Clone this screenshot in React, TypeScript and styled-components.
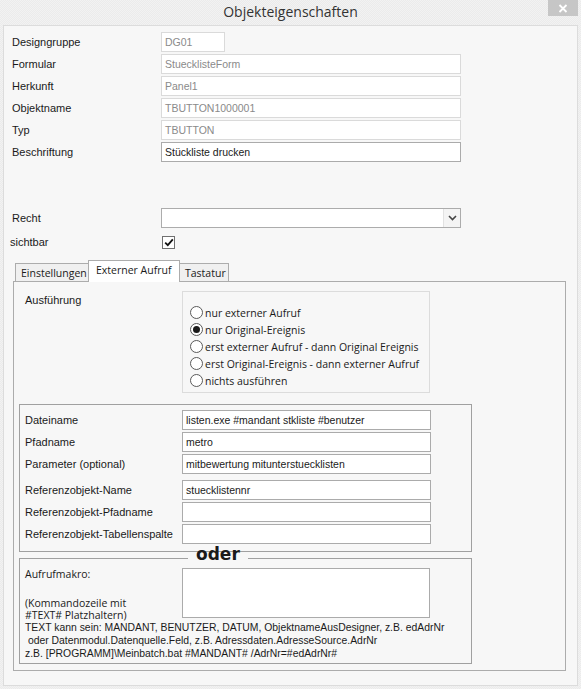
import React from "react";
import styled, { createGlobalStyle } from "styled-components";

const Global = createGlobalStyle`
  html, body { margin: 0; padding: 0; }
  body { font-family: "Liberation Sans", Arial, sans-serif; font-size: 11px; color: #1a1a1a; }
  * { box-sizing: border-box; }
`;

const Window = styled.div`
  width: 581px;
  height: 689px;
  display: flex;
  flex-direction: column;
  background-color: #eeeeee;
  background-image: repeating-conic-gradient(#ebebeb 0 25%, #f2f2f2 0 50%);
  background-size: 2px 2px;
`;

const TitleBar = styled.div`
  position: relative;
  height: 25px;
  flex: none;
  display: flex;
  align-items: center;
  justify-content: center;
  font-family: "Open Sans", sans-serif;
  font-size: 14px;
  color: #333;
  padding-bottom: 2px;
`;

const CloseButton = styled.div`
  position: absolute;
  top: 0;
  right: 3px;
  width: 30px;
  height: 16px;
  background: #c6c6c6;
  display: flex;
  align-items: center;
  justify-content: center;
`;

const Client = styled.div`
  flex: 1;
  margin: 0 3px 3px 3px;
  border: 1px solid #dcdcdc;
  background: #f7f7f7;
  padding: 6px 0 0 8px;
  display: flex;
  flex-direction: column;
  align-items: flex-start;
`;

const FieldRow = styled.div<{ $mt?: number }>`
  display: grid;
  grid-template-columns: 149px auto;
  align-items: center;
  height: 20px;
  margin-bottom: 2px;
  margin-top: ${(p) => p.$mt ?? 0}px;
`;

const Label = styled.span<{ $shift?: number }>`
  white-space: nowrap;
  margin-left: ${(p) => p.$shift ?? 0}px;
`;

const TextBox = styled.div<{ $w: number; $muted?: boolean }>`
  width: ${(p) => p.$w}px;
  height: 20px;
  background: #fff;
  border: 1px solid ${(p) => (p.$muted ? "#dadada" : "#ababab")};
  color: ${(p) => (p.$muted ? "#8a8a8a" : "#1a1a1a")};
  font-size: 10.5px;
  padding: 0 3px;
  display: flex;
  align-items: center;
  white-space: nowrap;
  overflow: hidden;
`;

const Select = styled.div`
  width: 300px;
  height: 20px;
  background: #fff;
  border: 1px solid #acacac;
  display: flex;
  justify-content: flex-end;
`;

const DropButton = styled.div`
  width: 17px;
  height: 100%;
  border-left: 1px solid #e2e2e2;
  background: #f4f4f4;
  display: flex;
  align-items: center;
  justify-content: center;
`;

const CheckBox = styled.div`
  width: 13px;
  height: 13px;
  margin-left: 1px;
  border: 1px solid #707070;
  background: #fff;
  display: flex;
  align-items: center;
  justify-content: center;
`;

const TabsArea = styled.div`
  margin: 6px 0 0 1px;
  width: 553px;
`;

const TabStrip = styled.div`
  display: flex;
  align-items: flex-end;
  height: 21px;
  padding-left: 2px;
`;

const Tab = styled.div<{ $active?: boolean; $w: number }>`
  position: relative;
  z-index: ${(p) => (p.$active ? 2 : 1)};
  width: ${(p) => p.$w}px;
  height: ${(p) => (p.$active ? 22 : 18)}px;
  margin-bottom: ${(p) => (p.$active ? -1 : 0)}px;
  margin-left: ${(p) => (p.$active ? -1 : 0)}px;
  margin-right: ${(p) => (p.$active ? -1 : 0)}px;
  border: 1px solid #acacac;
  border-bottom: none;
  background: ${(p) => (p.$active ? "#fff" : "#f0f0f0")};
  font-family: "Open Sans", sans-serif;
  font-size: 10.5px;
  color: #1a1a1a;
  display: flex;
  align-items: center;
  padding-left: ${(p) => (p.$active ? 7 : 5)}px;
  padding-bottom: ${(p) => (p.$active ? 3 : 0)}px;
  white-space: nowrap;
`;

const Panel = styled.div`
  border: 1px solid #acacac;
  background: #f7f7f7;
  padding: 9px 5px 6px 5px;
`;

const ExecSection = styled.div`
  display: grid;
  grid-template-columns: 157px 248px;
  padding-left: 6px;
`;

const SectionLabel = styled.div`
  padding-top: 3px;
  line-height: 13px;
`;

const RadioBox = styled.div`
  height: 102px;
  border: 1px solid #dcdcdc;
  padding: 12px 0 0 7px;
  display: flex;
  flex-direction: column;
`;

const RadioItem = styled.div`
  height: 17px;
  display: flex;
  align-items: center;
  gap: 2px;
  font-family: "Open Sans", sans-serif;
  font-size: 10.5px;
  color: #1a1a1a;
  white-space: nowrap;
`;

const RadioCircle = styled.span<{ $on?: boolean }>`
  width: 13px;
  height: 13px;
  border-radius: 50%;
  border: 1px solid #5a5a5a;
  background: #fff;
  display: inline-flex;
  align-items: center;
  justify-content: center;
  flex: none;
  &::after {
    content: "";
    width: 7px;
    height: 7px;
    border-radius: 50%;
    background: ${(p) => (p.$on ? "#1a1a1a" : "transparent")};
  }
`;

const GroupBox = styled.div`
  margin-top: 11px;
  width: 453px;
  border: 1px solid #a0a0a0;
  padding: 5px 0 7px 5px;
  display: flex;
  flex-direction: column;
  gap: 2px;
`;

const GroupRow = styled.div<{ $mt?: number }>`
  display: grid;
  grid-template-columns: 157px 249px;
  align-items: center;
  height: 20px;
  margin-top: ${(p) => p.$mt ?? 0}px;
`;

const OrBox = styled.fieldset`
  margin: 0;
  width: 453px;
  border: 1px solid #a0a0a0;
  padding: 0 0 3px 5px;
  min-width: 0;
`;

const OrLegend = styled.legend`
  font-family: "DejaVu Sans", sans-serif;
  font-weight: bold;
  font-size: 17px;
  line-height: 4px;
  margin-left: 163px;
  padding: 0 8px 8px 8px;
  color: #1a1a1a;
`;

const MacroRow = styled.div`
  display: grid;
  grid-template-columns: 157px 248px;
  align-items: start;
  margin-top: 4px;
`;

const MacroLabel = styled.div`
  font-family: "Open Sans", sans-serif;
  font-size: 10.5px;
  line-height: 13px;
`;

const MacroNote = styled.div`
  margin-top: 16px;
  line-height: 12px;
  white-space: pre;
`;

const MacroArea = styled.div`
  height: 50px;
  background: #fff;
  border: 1px solid #ababab;
`;

const Hint = styled.div`
  margin-top: 0;
  font-size: 10.4px;
  line-height: 13px;
  white-space: pre;
`;

const topFields: { label: string; value: string; w: number; muted: boolean }[] = [
  { label: "Designgruppe", value: "DG01", w: 64, muted: true },
  { label: "Formular", value: "StuecklisteForm", w: 300, muted: true },
  { label: "Herkunft", value: "Panel1", w: 300, muted: true },
  { label: "Objektname", value: "TBUTTON1000001", w: 300, muted: true },
  { label: "Typ", value: "TBUTTON", w: 300, muted: true },
  { label: "Beschriftung", value: "Stückliste drucken", w: 300, muted: false },
];

const radios = [
  "nur externer Aufruf",
  "nur Original-Ereignis",
  "erst externer Aufruf - dann Original Ereignis",
  "erst Original-Ereignis - dann externer Aufruf",
  "nichts ausführen",
];

const groupFields: { label: string; value: string; mt?: number }[] = [
  { label: "Dateiname", value: "listen.exe #mandant stkliste #benutzer" },
  { label: "Pfadname", value: "metro" },
  { label: "Parameter (optional)", value: "mitbewertung mitunterstuecklisten" },
  { label: "Referenzobjekt-Name", value: "stuecklistennr", mt: 4 },
  { label: "Referenzobjekt-Pfadname", value: "" },
  { label: "Referenzobjekt-Tabellenspalte", value: "" },
];

export default function App() {
  return (
    <>
      <Global />
      <Window>
        <TitleBar>
          Objekteigenschaften
          <CloseButton>
            <svg width="10" height="9" viewBox="0 0 10 9">
              <path d="M1.5 1 L8.5 8 M8.5 1 L1.5 8" stroke="#fff" strokeWidth="1.8" />
            </svg>
          </CloseButton>
        </TitleBar>
        <Client>
          {topFields.map((f) => (
            <FieldRow key={f.label}>
              <Label>{f.label}</Label>
              <TextBox $w={f.w} $muted={f.muted}>
                {f.value}
              </TextBox>
            </FieldRow>
          ))}
          <FieldRow $mt={44}>
            <Label>Recht</Label>
            <Select>
              <DropButton>
                <svg width="9" height="6" viewBox="0 0 9 6">
                  <path d="M1 1 L4.5 4.5 L8 1" stroke="#444" strokeWidth="1.6" fill="none" />
                </svg>
              </DropButton>
            </Select>
          </FieldRow>
          <FieldRow $mt={2}>
            <Label $shift={-2}>sichtbar</Label>
            <CheckBox>
              <svg width="10" height="9" viewBox="0 0 10 9">
                <path d="M1.2 4.6 L3.8 7.2 L8.8 1.4" stroke="#111" strokeWidth="1.8" fill="none" />
              </svg>
            </CheckBox>
          </FieldRow>
          <TabsArea>
            <TabStrip>
              <Tab $w={74}>Einstellungen</Tab>
              <Tab $w={92} $active>
                Externer Aufruf
              </Tab>
              <Tab $w={50}>Tastatur</Tab>
            </TabStrip>
            <Panel>
              <ExecSection>
                <SectionLabel>Ausführung</SectionLabel>
                <RadioBox>
                  {radios.map((r, i) => (
                    <RadioItem key={r}>
                      <RadioCircle $on={i === 1} />
                      {r}
                    </RadioItem>
                  ))}
                </RadioBox>
              </ExecSection>
              <GroupBox>
                {groupFields.map((f) => (
                  <GroupRow key={f.label} $mt={f.mt}>
                    <Label>{f.label}</Label>
                    <TextBox $w={249}>{f.value}</TextBox>
                  </GroupRow>
                ))}
              </GroupBox>
              <OrBox>
                <OrLegend>oder</OrLegend>
                <MacroRow>
                  <MacroLabel>
                    Aufrufmakro:
                    <MacroNote>{"(Kommandozeile mit\n#TEXT# Platzhaltern)"}</MacroNote>
                  </MacroLabel>
                  <MacroArea />
                </MacroRow>
                <Hint>
                  {"TEXT kann sein: MANDANT, BENUTZER, DATUM, ObjektnameAusDesigner, z.B. edAdrNr\n oder Datenmodul.Datenquelle.Feld, z.B. Adressdaten.AdresseSource.AdrNr\nz.B. [PROGRAMM]\\Meinbatch.bat #MANDANT# /AdrNr=#edAdrNr#"}
                </Hint>
              </OrBox>
            </Panel>
          </TabsArea>
        </Client>
      </Window>
    </>
  );
}
